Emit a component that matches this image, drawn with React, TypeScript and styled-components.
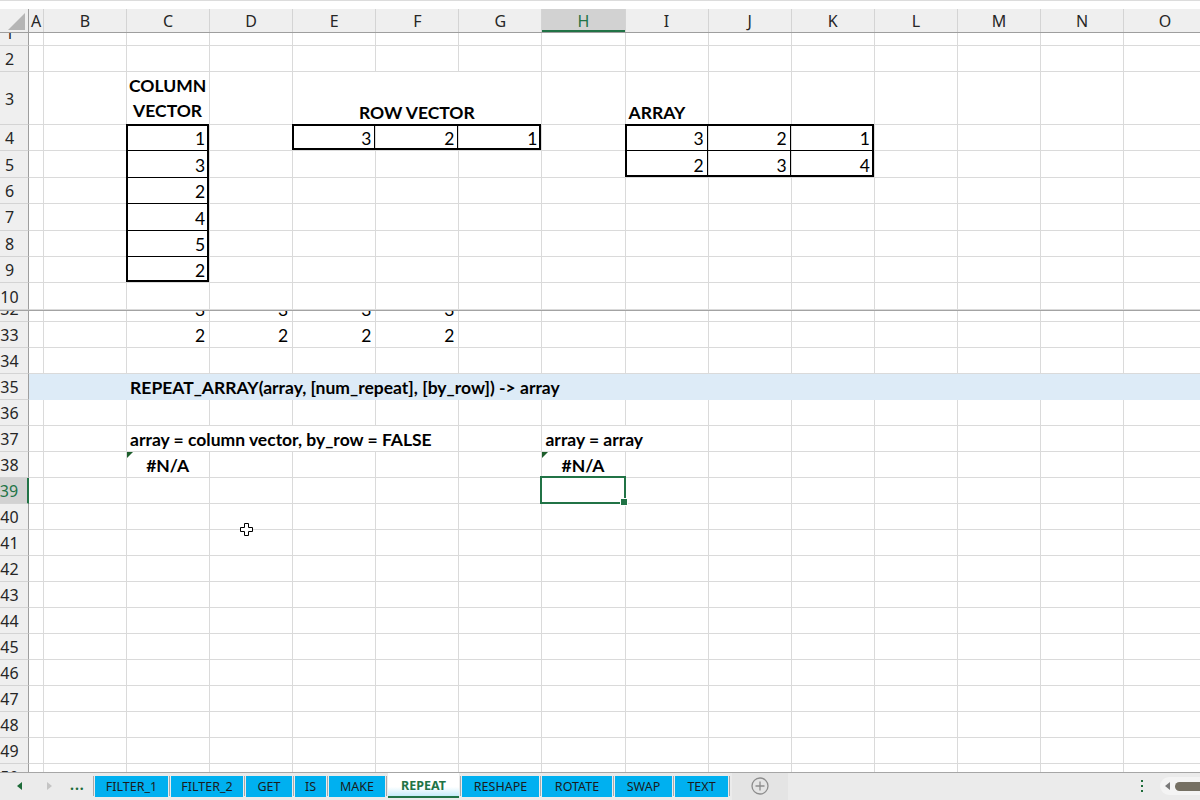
import React from "react";
import styled, { createGlobalStyle, css } from "styled-components";

const GRID = "#dadada";
const HEAD_BG = "#efefef";
const HEAD_LINE = "#9e9e9e";
const GREEN = "#217346";
const TAB_BLUE = "#00b0f0";
const COL_TEMPLATE = "29px 15px repeat(14, 83.08px)";
const LETTERS = ["A", "B", "C", "D", "E", "F", "G", "H", "I", "J", "K", "L", "M", "N", "O"];

const GlobalStyle = createGlobalStyle`
  html, body {
    margin: 0;
    padding: 0;
    overflow: hidden;
    background: #ffffff;
  }
  * {
    box-sizing: border-box;
  }
`;

const Page = styled.div`
  position: relative;
  width: 1200px;
  height: 800px;
  overflow: hidden;
  display: flex;
  flex-direction: column;
  background: #ffffff;
  font-family: "Noto Sans", "Open Sans", sans-serif;
`;

const TopStrip = styled.div`
  height: 9px;
  flex-shrink: 0;
  border-top: 1px solid #dcdcdc;
  background: #ffffff;
`;

const HeaderRow = styled.div`
  display: grid;
  grid-template-columns: ${COL_TEMPLATE};
  height: 24px;
  flex-shrink: 0;
  background: ${HEAD_BG};
  border-bottom: 1px solid ${HEAD_LINE};
`;

const Corner = styled.div`
  display: flex;
  align-items: flex-end;
  justify-content: flex-end;
  padding: 0 3px 2px 0;
  border-right: 1px solid ${HEAD_LINE};
`;

const ColHead = styled.div<{ $active?: boolean }>`
  display: flex;
  align-items: center;
  justify-content: center;
  font-size: 16px;
  color: #262626;
  border-right: 1px solid #d4d4d4;
  ${(p) =>
    p.$active &&
    css`
      background: #d2d2d2;
      color: ${GREEN};
      box-shadow: inset 0 -2px 0 ${GREEN};
    `}
`;

const Pane = styled.div`
  display: flex;
  flex-direction: column;
  flex-shrink: 0;
`;

const RowClip = styled.div<{ $h: number; $cut: "top" | "bottom" }>`
  height: ${(p) => p.$h}px;
  overflow: hidden;
  display: flex;
  flex-direction: column;
  justify-content: ${(p) => (p.$cut === "top" ? "flex-end" : "flex-start")};
  flex-shrink: 0;
`;

const RowLine = styled.div<{ $h: number }>`
  display: grid;
  grid-template-columns: ${COL_TEMPLATE};
  height: ${(p) => p.$h}px;
  flex-shrink: 0;
`;

const RowHead = styled.div<{ $active?: boolean }>`
  display: flex;
  align-items: center;
  justify-content: center;
  padding: 1px 9px 0 0;
  font-size: 16px;
  color: #262626;
  background: ${HEAD_BG};
  border-right: 1px solid ${HEAD_LINE};
  border-bottom: 1px solid #d4d4d4;
  ${(p) =>
    p.$active &&
    css`
      background: #d2d2d2;
      color: ${GREEN};
      border-right: 2px solid ${GREEN};
    `}
`;

const Cell = styled.div<{
  $align: "left" | "right" | "center";
  $bold?: boolean;
  $fill?: string;
  $wrap?: boolean;
  $span: number;
}>`
  position: relative;
  grid-column: span ${(p) => p.$span};
  display: flex;
  align-items: flex-end;
  justify-content: ${(p) =>
    p.$align === "right" ? "flex-end" : p.$align === "center" ? "center" : "flex-start"};
  padding: 0 4px 1px 3px;
  font-family: "Lato", sans-serif;
  font-size: 17.5px;
  line-height: 1.2;
  font-weight: ${(p) => (p.$bold ? 700 : 400)};
  color: #000000;
  white-space: nowrap;
  background: ${(p) => p.$fill ?? "transparent"};
  border-right: 1px solid ${(p) => p.$fill ?? GRID};
  border-bottom: 1px solid ${(p) => p.$fill ?? GRID};
  ${(p) =>
    p.$wrap &&
    css`
      white-space: normal;
      text-align: center;
      line-height: 25px;
    `}
`;

const Frame = styled.span<{ $w: [number, number, number, number] }>`
  position: absolute;
  top: -1px;
  left: -1px;
  right: 0;
  bottom: 0;
  border-style: solid;
  border-color: #000000;
  border-width: ${(p) => p.$w.map((v) => `${v}px`).join(" ")};
  pointer-events: none;
  z-index: 1;
`;

const ErrorFlag = styled.span`
  position: absolute;
  top: 0;
  left: 0;
  width: 0;
  height: 0;
  border-top: 6px solid #1d5e2c;
  border-right: 6px solid transparent;
`;

const Selection = styled.span`
  position: absolute;
  top: -2px;
  left: -2px;
  right: -1px;
  bottom: -1px;
  border: 2px solid ${GREEN};
  z-index: 2;
  &::after {
    content: "";
    position: absolute;
    right: -4px;
    bottom: -4px;
    width: 6px;
    height: 6px;
    background: ${GREEN};
    border: 1px solid #ffffff;
  }
`;

const FreezeLine = styled.div`
  height: 1px;
  flex-shrink: 0;
  background: #a3a3a3;
`;

const CursorMark = styled.svg`
  position: absolute;
  left: 240px;
  top: 523px;
  z-index: 5;
`;

/* sheet tabs */

const TabBar = styled.div`
  display: flex;
  align-items: center;
  height: 28px;
  flex-shrink: 0;
  background: #ebebeb;
  border-top: 1px solid #a6a6a6;
  font-family: "Noto Sans", "Open Sans", sans-serif;
`;

const Nav = styled.div`
  display: flex;
  align-items: center;
  width: 92px;
  height: 100%;
  padding-left: 17px;
  gap: 23px;
`;

const Dots = styled.span`
  color: #1d6b39;
  font-weight: 700;
  font-size: 14px;
  letter-spacing: 1px;
  margin: -4px 0 0 -5px;
`;

const Tabs = styled.div`
  display: flex;
  align-items: center;
  height: 100%;
`;

const TabSep = styled.span`
  width: 1px;
  height: 20px;
  margin: 0 1px;
  background: #a9a9a9;
`;

const Tab = styled.div<{ $w: number; $active?: boolean }>`
  width: ${(p) => p.$w}px;
  height: 21px;
  display: flex;
  align-items: center;
  justify-content: center;
  background: ${TAB_BLUE};
  color: #1b1b1b;
  font-size: 12.5px;
  ${(p) =>
    p.$active &&
    css`
      align-self: stretch;
      height: auto;
      margin-bottom: 2px;
      padding-top: 2px;
      background: linear-gradient(to bottom, #ffffff 60%, #c6ecfa 100%);
      border-bottom: 2px solid ${GREEN};
      color: ${GREEN};
      font-weight: 700;
    `}
`;

const AddArea = styled.div`
  display: flex;
  align-items: center;
  justify-content: center;
  width: 56px;
  height: 100%;
  margin-left: 1px;
  background: #e4e4e4;
`;

const Spacer = styled.div`
  flex: 1;
`;

const VDots = styled.div`
  display: flex;
  flex-direction: column;
  gap: 3px;
  margin-right: 17px;
  span {
    width: 2px;
    height: 2px;
    background: #1d6b39;
  }
`;

const ScrollTrack = styled.div`
  display: flex;
  align-items: center;
  gap: 5px;
  width: 40px;
  height: 18px;
  padding-left: 5px;
  background: #f4f4f4;
  border-radius: 9px 0 0 9px;
`;

const Thumb = styled.span`
  flex: 1;
  height: 9px;
  background: #757063;
  border-radius: 5px 0 0 5px;
`;

type Side = [number, number, number, number];

type CellSpec = {
  col: number;
  span?: number;
  text?: string;
  align?: "left" | "right" | "center";
  bold?: boolean;
  wrap?: boolean;
  frame?: Side;
  flag?: boolean;
  selected?: boolean;
};

type RowSpec = {
  n: number;
  h: number;
  cells?: CellSpec[];
  fill?: string;
  active?: boolean;
  clip?: { h: number; cut: "top" | "bottom" };
};

const SheetRow = ({ row }: { row: RowSpec }) => {
  const byCol = new Map<number, CellSpec>();
  (row.cells ?? []).forEach((c) => byCol.set(c.col, c));
  const out: React.ReactNode[] = [];
  for (let i = 0; i < LETTERS.length; i++) {
    const c = byCol.get(i);
    const span = c?.span ?? 1;
    out.push(
      <Cell
        key={i}
        $span={span}
        $align={c?.align ?? "right"}
        $bold={c?.bold}
        $wrap={c?.wrap}
        $fill={row.fill}
      >
        {c?.text}
        {c?.frame && <Frame $w={c.frame} />}
        {c?.flag && <ErrorFlag />}
        {c?.selected && <Selection />}
      </Cell>
    );
    i += span - 1;
  }
  const line = (
    <RowLine $h={row.h}>
      <RowHead $active={row.active}>{row.n}</RowHead>
      {out}
    </RowLine>
  );
  if (!row.clip) return line;
  return (
    <RowClip $h={row.clip.h} $cut={row.clip.cut}>
      {line}
    </RowClip>
  );
};

const C = 2, D = 3, E = 4, F = 5, G = 6, H = 7, I = 8, J = 9, K = 10;
const num = (col: number, text: string, frame?: Side): CellSpec => ({ col, text, frame });

const topRows: RowSpec[] = [
  { n: 1, h: 26, clip: { h: 13, cut: "top" } },
  { n: 2, h: 26 },
  {
    n: 3,
    h: 53,
    cells: [
      { col: C, text: "COLUMN VECTOR", bold: true, align: "center", wrap: true },
      { col: E, span: 3, text: "ROW VECTOR", bold: true, align: "center" },
      { col: I, text: "ARRAY", bold: true, align: "left" },
    ],
  },
  {
    n: 4,
    h: 26.4,
    cells: [
      num(C, "1", [2, 2, 0, 2]),
      num(E, "3", [2, 1, 2, 2]),
      num(F, "2", [2, 1, 2, 0]),
      num(G, "1", [2, 2, 2, 0]),
      num(I, "3", [2, 1, 0, 2]),
      num(J, "2", [2, 1, 0, 0]),
      num(K, "1", [2, 2, 0, 0]),
    ],
  },
  {
    n: 5,
    h: 26.4,
    cells: [
      num(C, "3", [1, 2, 0, 2]),
      num(I, "2", [1, 1, 2, 2]),
      num(J, "3", [1, 1, 2, 0]),
      num(K, "4", [1, 2, 2, 0]),
    ],
  },
  { n: 6, h: 26.4, cells: [num(C, "2", [1, 2, 0, 2])] },
  { n: 7, h: 26.4, cells: [num(C, "4", [1, 2, 0, 2])] },
  { n: 8, h: 26.4, cells: [num(C, "5", [1, 2, 0, 2])] },
  { n: 9, h: 26.4, cells: [num(C, "2", [1, 2, 2, 2])] },
  { n: 10, h: 26.4 },
];

const bottomRows: RowSpec[] = [
  {
    n: 32,
    h: 26,
    clip: { h: 11, cut: "top" },
    cells: [num(C, "3"), num(D, "3"), num(E, "3"), num(F, "3")],
  },
  { n: 33, h: 26, cells: [num(C, "2"), num(D, "2"), num(E, "2"), num(F, "2")] },
  { n: 34, h: 26 },
  {
    n: 35,
    h: 26,
    fill: "#ddebf7",
    cells: [
      {
        col: C,
        span: 6,
        text: "REPEAT_ARRAY(array, [num_repeat], [by_row]) -> array",
        bold: true,
        align: "left",
      },
    ],
  },
  { n: 36, h: 26 },
  {
    n: 37,
    h: 26,
    cells: [
      { col: C, span: 4, text: "array = column vector, by_row = FALSE", bold: true, align: "left" },
      { col: H, span: 2, text: "array = array", bold: true, align: "left" },
    ],
  },
  {
    n: 38,
    h: 26,
    cells: [
      { col: C, text: "#N/A", bold: true, align: "center", flag: true },
      { col: H, text: "#N/A", bold: true, align: "center", flag: true },
    ],
  },
  { n: 39, h: 26, active: true, cells: [{ col: H, selected: true }] },
  ...Array.from({ length: 10 }, (_, k) => ({ n: 40 + k, h: 26 })),
  { n: 50, h: 26, clip: { h: 8, cut: "bottom" } },
];

const sheetTabs = [
  { name: "FILTER_1", w: 73 },
  { name: "FILTER_2", w: 72 },
  { name: "GET", w: 46 },
  { name: "IS", w: 31 },
  { name: "MAKE", w: 56 },
  { name: "REPEAT", w: 71, active: true },
  { name: "RESHAPE", w: 77 },
  { name: "ROTATE", w: 70 },
  { name: "SWAP", w: 57 },
  { name: "TEXT", w: 53 },
];

export default function App() {
  return (
    <Page>
      <GlobalStyle />
      <TopStrip />
      <HeaderRow>
        <Corner>
          <svg width="17" height="17" viewBox="0 0 17 17">
            <polygon points="17,0 17,17 0,17" fill="#b5b5b5" />
          </svg>
        </Corner>
        {LETTERS.map((l) => (
          <ColHead key={l} $active={l === "H"}>
            {l}
          </ColHead>
        ))}
      </HeaderRow>

      <Pane>
        {topRows.map((r) => (
          <SheetRow key={r.n} row={r} />
        ))}
      </Pane>
      <FreezeLine />
      <Pane>
        {bottomRows.map((r) => (
          <SheetRow key={r.n} row={r} />
        ))}
      </Pane>

      <TabBar>
        <Nav>
          <svg width="6" height="8" viewBox="0 0 6 8">
            <polygon points="5,0 5,8 0,4" fill="#1d6b39" />
          </svg>
          <svg width="6" height="8" viewBox="0 0 6 8">
            <polygon points="1,0 1,8 6,4" fill="#c4c4c4" />
          </svg>
          <Dots>...</Dots>
        </Nav>
        <Tabs>
          <TabSep />
          {sheetTabs.map((t, i) => (
            <React.Fragment key={t.name}>
              {i > 0 && <TabSep />}
              <Tab $w={t.w} $active={t.active}>
                {t.name}
              </Tab>
            </React.Fragment>
          ))}
          <TabSep />
        </Tabs>
        <AddArea>
          <svg width="18" height="18" viewBox="0 0 18 18">
            <circle cx="9" cy="9" r="8" fill="none" stroke="#8c8c8c" strokeWidth="1.3" />
            <path d="M9 4.5v9M4.5 9h9" stroke="#8c8c8c" strokeWidth="1.3" />
          </svg>
        </AddArea>
        <Spacer />
        <VDots>
          <span />
          <span />
          <span />
        </VDots>
        <ScrollTrack>
          <svg width="5" height="8" viewBox="0 0 5 8">
            <polygon points="5,0 5,8 0,4" fill="#7a7a7a" />
          </svg>
          <Thumb />
        </ScrollTrack>
      </TabBar>

      <CursorMark width="13" height="13" viewBox="0 0 13 13">
        <polygon
          points="4.5,0.5 8.5,0.5 8.5,4.5 12.5,4.5 12.5,8.5 8.5,8.5 8.5,12.5 4.5,12.5 4.5,8.5 0.5,8.5 0.5,4.5 4.5,4.5"
          fill="#ffffff"
          stroke="#000000"
          strokeWidth="1"
        />
      </CursorMark>
    </Page>
  );
}
